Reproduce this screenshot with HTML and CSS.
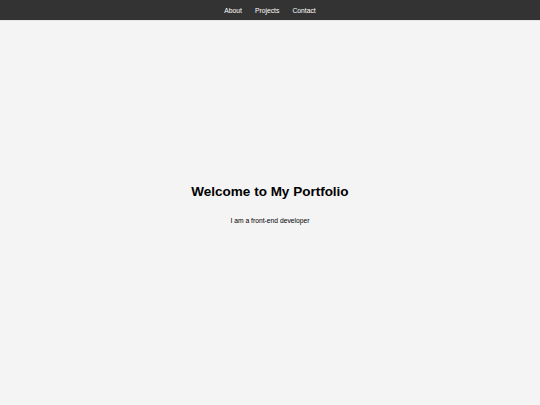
FILE: index.html
```html
<!DOCTYPE html>
<html>
<head>
<meta charset="utf-8">
<link rel="stylesheet" href="styles.css">
</head>
<body>
<header class="site-header">
  <nav class="nav">
    <a href="#about">About</a>
    <a href="#projects">Projects</a>
    <a href="#contact">Contact</a>
  </nav>
</header>
<main class="hero">
  <h1 class="hero-title">Welcome to My Portfolio</h1>
  <p class="hero-text">I am a front-end developer</p>
</main>
</body>
</html>
```

FILE: styles.css
```css
html, body {
  margin: 0;
  padding: 0;
  height: 100%;
}
body {
  font-family: "Liberation Sans", Arial, sans-serif;
  background: #f4f4f4;
  color: #000;
  display: flex;
  flex-direction: column;
}
.site-header {
  background: #333;
  height: 20px;
  display: flex;
  align-items: center;
  justify-content: center;
  border-bottom: 1px solid #e6e6e6;
}
.nav {
  display: flex;
  gap: 13px;
}
.nav a {
  color: #fff;
  text-decoration: none;
  font-size: 6.75px;
}
.hero {
  flex: 1;
  display: flex;
  flex-direction: column;
  align-items: center;
  justify-content: center;
  padding-bottom: 19px;
}
.hero-title {
  font-size: 13.5px;
  font-weight: bold;
  margin: 0;
}
.hero-text {
  font-size: 6.75px;
  margin: 18px 0 0;
}
```
